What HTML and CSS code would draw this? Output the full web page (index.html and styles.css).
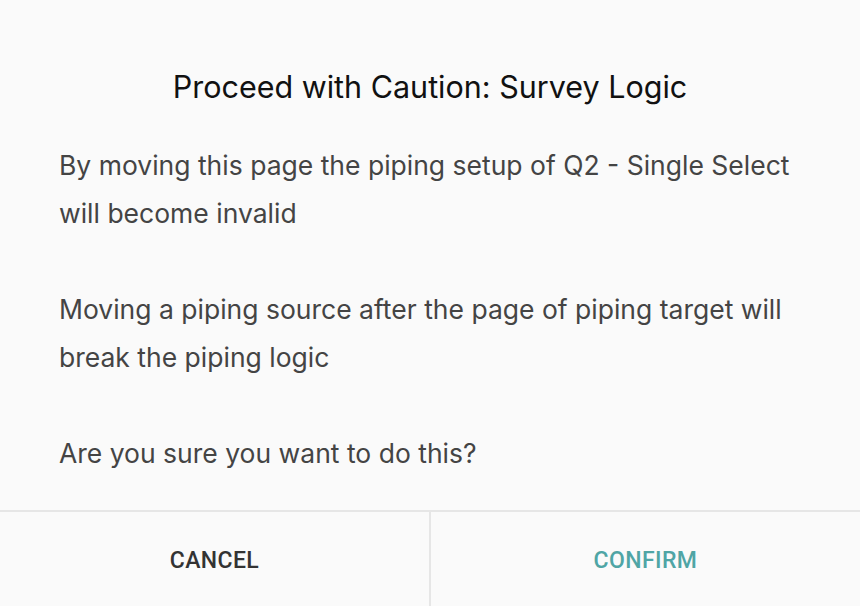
FILE: index.html
```html
<!DOCTYPE html>
<html lang="en">
<head>
    <meta charset="UTF-8">
    <title>Proceed with Caution</title>
    <link rel="stylesheet" href="styles.css">
</head>
<body>

<div class="dialog">
    <h2 class="dialog-title">Proceed with Caution: Survey Logic</h2>

    <div class="dialog-body">
        <p>By moving this page the piping setup of Q2 - Single Select will become invalid</p>
        <p>Moving a piping source after the page of piping target will break the piping logic</p>
        <p>Are you sure you want to do this?</p>
    </div>

    <div class="dialog-actions">
        <button class="btn btn-cancel">Cancel</button>
        <button class="btn btn-confirm">Confirm</button>
    </div>
</div>

</body>
</html>
```

FILE: styles.css
```css
body {
    margin: 0;
    padding: 0;
    background-color: #fafafa;
    font-family: Inter, "Noto Sans", sans-serif;
    color: #444;
}
.dialog {
    width: 860px;
    height: 606px;
    display: flex;
    flex-direction: column;
    background: #fafafa;
}
.dialog-title {
    margin: 0;
    padding-top: 67px;
    text-align: center;
    font-size: 30.5px;
    font-weight: 400;
    line-height: 40px;
    color: #111;
}
.dialog-body {
    padding: 34px 59px 0;
    flex: 1;
    min-height: 0;
}
.dialog-body p {
    margin: 0 0 48px;
    font-size: 26.5px;
    line-height: 48px;
    color: #444;
}
.dialog-body p:last-child {
    margin-bottom: 0;
}
.dialog-actions {
    display: flex;
    flex-shrink: 0;
    border-top: 2px solid #e6e6e6;
    height: 94px;
}
.btn {
    flex: 1;
    padding: 3px 0 0;
    background: none;
    border: none;
    font-family: Roboto, "Noto Sans", sans-serif;
    font-size: 23px;
    font-weight: 500;
    text-transform: uppercase;
    letter-spacing: 0.4px;
    cursor: pointer;
}
.btn + .btn {
    border-left: 2px solid #e6e6e6;
}
.btn-cancel {
    color: #333;
}
.btn-confirm {
    color: #4fa5a5;
}
```
